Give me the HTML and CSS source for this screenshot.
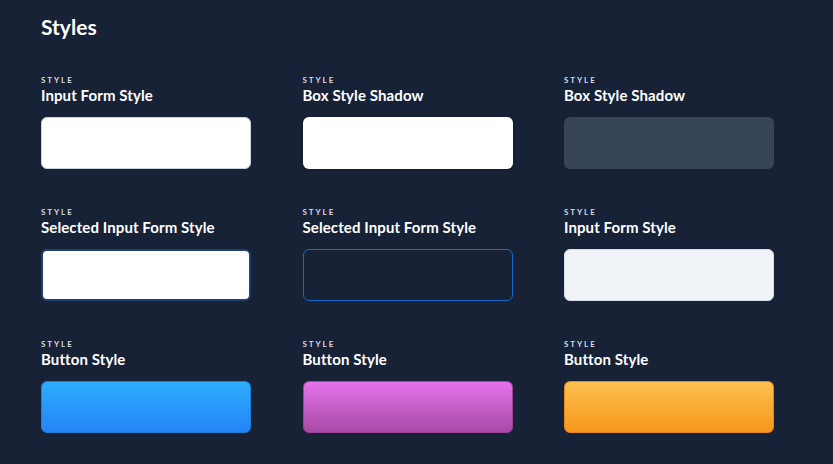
FILE: index.html
```html
<!DOCTYPE html>
<html lang="en">
<head>
    <meta charset="UTF-8">
    <meta name="viewport" content="width=device-width, initial-scale=1.0">
    <title>Styles</title>
    <link rel="stylesheet" href="styles.css">
</head>
<body>
    <h1 class="titulo">Styles</h1>

    <div class="rejilla">
        <div class="muestra">
            <div class="etiqueta">Style</div>
            <h2>Input Form Style</h2>
            <div class="caja caja-input"></div>
        </div>
        <div class="muestra">
            <div class="etiqueta">Style</div>
            <h2>Box Style Shadow</h2>
            <div class="caja caja-sombra"></div>
        </div>
        <div class="muestra">
            <div class="etiqueta">Style</div>
            <h2>Box Style Shadow</h2>
            <div class="caja caja-oscura"></div>
        </div>

        <div class="muestra">
            <div class="etiqueta">Style</div>
            <h2>Selected Input Form Style</h2>
            <div class="caja caja-seleccionada"></div>
        </div>
        <div class="muestra">
            <div class="etiqueta">Style</div>
            <h2>Selected Input Form Style</h2>
            <div class="caja caja-contorno"></div>
        </div>
        <div class="muestra">
            <div class="etiqueta">Style</div>
            <h2>Input Form Style</h2>
            <div class="caja caja-clara"></div>
        </div>

        <div class="muestra">
            <div class="etiqueta">Style</div>
            <h2>Button Style</h2>
            <div class="caja boton-azul"></div>
        </div>
        <div class="muestra">
            <div class="etiqueta">Style</div>
            <h2>Button Style</h2>
            <div class="caja boton-rosa"></div>
        </div>
        <div class="muestra">
            <div class="etiqueta">Style</div>
            <h2>Button Style</h2>
            <div class="caja boton-naranja"></div>
        </div>
    </div>
</body>
</html>
```

FILE: styles.css
```css
body {
    font-family: Lato, "Open Sans", sans-serif;
    background-color: #172236;
    color: #fff;
    margin: 0;
    padding: 14px 0 0 41px;
    height: 100vh;
    box-sizing: border-box;
    overflow: hidden;
}

.titulo {
    font-size: 21px;
    font-weight: 700;
    line-height: 25px;
    margin: 0;
}

.rejilla {
    display: grid;
    grid-template-columns: repeat(3, 210px);
    column-gap: 51.5px;
    row-gap: 38px;
    margin-top: 36px;
}

.muestra {
    display: flex;
    flex-direction: column;
}

.etiqueta {
    font-size: 8px;
    font-weight: 700;
    line-height: 10px;
    letter-spacing: 1.9px;
    text-transform: uppercase;
    color: #d6dbe3;
}

.muestra h2 {
    font-size: 15px;
    font-weight: 700;
    line-height: 18px;
    letter-spacing: 0.1px;
    margin: 1px 0 0 0;
}

.caja {
    height: 52px;
    margin-top: 13px;
    border-radius: 6px;
    box-sizing: border-box;
}

.caja-input {
    background-color: #fff;
    border: 1px solid #c9d2de;
}

.caja-sombra {
    background-color: #fff;
    box-shadow: 0 1px 3px rgba(0, 0, 0, 0.25);
}

.caja-oscura {
    background-color: #384457;
}

.caja-seleccionada {
    background-color: #fff;
    border: 2px solid #22406f;
}

.caja-contorno {
    background-color: transparent;
    border: 1px solid #1668c6;
}

.caja-clara {
    background-color: #f0f4f8;
    border: 1px solid #d5dce5;
}

.boton-azul {
    background: linear-gradient(to bottom, #2eacfc, #2484f6);
    border: 1px solid #1f7fd6;
}

.boton-rosa {
    background: linear-gradient(to bottom, #e472ec, #a74aa5);
    border: 1px solid #9a4598;
}

.boton-naranja {
    background: linear-gradient(to bottom, #fbc14f, #f7961c);
    border: 1px solid #e3891a;
}
```
